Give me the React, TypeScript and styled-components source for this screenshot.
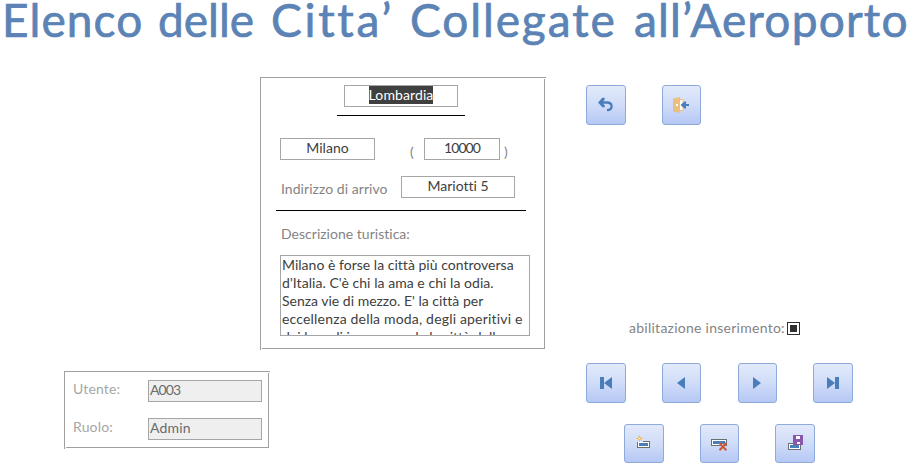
import React from "react";
import styled, { createGlobalStyle, css } from "styled-components";

const GlobalStyle = createGlobalStyle`
  * { box-sizing: border-box; }
  html, body { margin: 0; padding: 0; background: #fff; overflow: hidden; }
  body {
    font: 14px/18px Lato, "Open Sans", sans-serif;
    font-variant-ligatures: none;
    color: #404040;
  }
`;

const Page = styled.main`
  width: 916px;
  height: 466px;
`;

const Title = styled.h1`
  margin: 0;
  height: 77px;
  padding-left: 2px;
  display: flex;
  font: 400 46px/39px Lato, sans-serif;
  -webkit-text-stroke: 0.7px #5b83b5;
  color: #5b83b5;
  white-space: nowrap;
`;

const Word = styled.span<{ $width: number; $spacing: number }>`
  flex: none;
  width: ${(p) => p.$width}px;
  letter-spacing: ${(p) => p.$spacing}px;
`;

const Body = styled.div`
  display: flex;
  align-items: flex-start;
`;

const Records = styled.div`
  width: 586px;
  flex: none;
`;

/* Etched frame whose right and bottom edges start two pixels in. */
const frame = css`
  background-image: linear-gradient(#a0a0a0, #a0a0a0), linear-gradient(#a0a0a0, #a0a0a0),
    linear-gradient(#a0a0a0, #a0a0a0), linear-gradient(#a0a0a0, #a0a0a0);
  background-repeat: no-repeat;
  background-size: 100% 1px, 1px 100%, 1px calc(100% - 3px), calc(100% - 3px) 1px;
  background-position: 0 0, 0 0, right 1px top 2px, left 2px bottom 1px;
`;

const CityCard = styled.section`
  ${frame}
  width: 286px;
  height: 273px;
  margin-left: 260px;
  padding: 8px 16px 0;
`;

const UserCard = styled.section`
  ${frame}
  width: 206px;
  height: 78px;
  margin: 21px 0 0 64px;
  padding: 9px 0 0 9px;
  display: grid;
  grid-template-columns: 75px 114px;
  row-gap: 16px;
  align-content: start;
`;

const Field = styled.div<{ $width: number; $muted?: boolean; $spacing?: number }>`
  flex: none;
  width: ${(p) => p.$width}px;
  height: 22px;
  border: 1px solid #a6a6a6;
  background: ${(p) => (p.$muted ? "#efefef" : "#fff")};
  color: ${(p) => (p.$muted ? "#6b6b6b" : "#404040")};
  text-align: ${(p) => (p.$muted ? "left" : "center")};
  padding-left: ${(p) => (p.$muted ? 1 : 0)}px;
  letter-spacing: ${(p) => p.$spacing ?? 0}px;
  white-space: nowrap;
`;

const Region = styled(Field)`
  margin: 0 0 8px 68px;
`;

const Selected = styled.span`
  display: inline-block;
  height: 18px;
  background: #404040;
  color: #fff;
`;

const Rule = styled.hr<{ $width: number; $indent?: number }>`
  width: ${(p) => p.$width}px;
  height: 1px;
  margin: 0 0 0 ${(p) => p.$indent ?? 0}px;
  border: 0;
  background: #000;
`;

const CityRow = styled.div`
  display: flex;
  margin: 22px 0 0 4px;
`;

const AddressRow = styled.div`
  display: flex;
  margin: 15px 0 12px 5px;
`;

const Label = styled.span<{ $width?: number; $spacing?: number; $light?: boolean }>`
  flex: none;
  width: ${(p) => (p.$width ? `${p.$width}px` : "auto")};
  color: ${(p) => (p.$light ? "#a6a6a6" : "#848484")};
  letter-spacing: ${(p) => p.$spacing ?? 0}px;
  white-space: nowrap;
`;

const Paren = styled(Label)<{ $indent: number }>`
  padding: 5px 0 0 ${(p) => p.$indent}px;
`;

const AddressLabel = styled(Label)`
  padding-top: 4px;
`;

const DescriptionLabel = styled(Label)`
  display: block;
  margin: 14px 0 0 5px;
  height: 30px;
`;

const Description = styled.div`
  width: 250px;
  height: 81px;
  margin-left: 4px;
  padding-left: 1px;
  border: 1px solid #a6a6a6;
  overflow: hidden;
  white-space: nowrap;
`;

const Line = styled.div<{ $spacing: number }>`
  letter-spacing: ${(p) => p.$spacing}px;
`;

const Controls = styled.aside`
  flex: none;
  padding-top: 8px;
  width: 267px;
`;

const ButtonRow = styled.div`
  display: grid;
  grid-template-columns: 76px 76px 75px 40px;
`;

const LowerRow = styled.div`
  display: grid;
  grid-template-columns: 76px 75px 40px;
  margin: 21px 0 0 38px;
`;

const IconButton = styled.button<{ $short?: boolean; $narrow?: boolean }>`
  width: ${(p) => (p.$narrow ? 39 : 40)}px;
  height: ${(p) => (p.$short ? 39 : 40)}px;
  padding: 0;
  border: 1px solid #8eaadb;
  border-radius: 3px;
  background: linear-gradient(#e2eafa, #d0dcf8 50%, #b5c8f5);
  display: flex;
  align-items: flex-start;
  justify-content: flex-start;
  overflow: hidden;
`;

const Glyph = styled.svg`
  flex: none;
  display: block;
  width: 38px;
  height: 38px;
`;

const InsertToggle = styled.label`
  display: flex;
  margin: 194px 0 25px 43px;
  height: 19px;
`;

const CheckBox = styled.span`
  flex: none;
  width: 13px;
  height: 13px;
  margin-top: 3px;
  border: 1px solid #303030;
  background: #303030;
  background-clip: content-box;
  padding: 2px;
`;

const Icon = ({ children }: { children: React.ReactNode }) => (
  <Glyph viewBox="1 1 38 38" fill="none">{children}</Glyph>
);

const Record = ({ x, y, w }: { x: number; y: number; w: number }) => (
  <>
    <rect x={x + 0.5} y={y + 0.5} width={w - 1} height="6" fill="#fff" stroke="#6e6e6e" />
    <rect x={x + 2} y={y + 2} width={w - 4} height="3" fill="#4a7ebb" />
  </>
);

const App = () => (
  <Page>
    <GlobalStyle />
    <Title>
      <Word $width={156} $spacing={1.1}>Elenco</Word>
      <Word $width={113} $spacing={0}>delle</Word>
      <Word $width={139} $spacing={2.7}>Citta’</Word>
      <Word $width={224} $spacing={1.9}>Collegate</Word>
      <Word $width={280} $spacing={1.2}>all’Aeroporto</Word>
    </Title>
    <Body>
      <Records>
        <CityCard>
          <Region $width={114} $spacing={0.1}><Selected>Lombardia</Selected></Region>
          <Rule $width={128} $indent={61} />
          <CityRow>
            <Field $width={95}>Milano</Field>
            <Paren $width={49} $indent={35}>(</Paren>
            <Field $width={76} $spacing={-0.9}>10000</Field>
            <Paren $indent={4}>)</Paren>
          </CityRow>
          <AddressRow>
            <AddressLabel $width={120} $spacing={0.05}>Indirizzo di arrivo</AddressLabel>
            <Field $width={114}>Mariotti 5</Field>
          </AddressRow>
          <Rule $width={250} />
          <DescriptionLabel $spacing={0.02}>Descrizione turistica:</DescriptionLabel>
          <Description>
            <Line $spacing={0.02}>Milano è forse la città più controversa</Line>
            <Line $spacing={0.05}>d'Italia. C'è chi la ama e chi la odia.</Line>
            <Line $spacing={0}>Senza vie di mezzo. E' la città per</Line>
            <Line $spacing={0.18}>eccellenza della moda, degli aperitivi e</Line>
            <Line $spacing={0}>dei brandi in essa moda la città della</Line>
          </Description>
        </CityCard>
        <UserCard>
          <Label $light $spacing={0.15}>Utente:</Label>
          <Field $width={114} $muted $spacing={-0.9}>A003</Field>
          <Label $light $spacing={0.15}>Ruolo:</Label>
          <Field $width={114} $muted $spacing={0.2}>Admin</Field>
        </UserCard>
      </Records>
      <Controls>
        <ButtonRow>
          <IconButton aria-label="Annulla">
            <Icon>
              <path d="M14.5 17.5H21c6 0 6.2 7.3 0 7.6" stroke="#4a7ebb" strokeWidth="2.3" />
              <path d="M18.7 12.8h-2.4L12 17.5l4.3 4.7h2.4v-1.7l-2.4-3 2.4-3z" fill="#4a7ebb" />
            </Icon>
          </IconButton>
          <IconButton $narrow aria-label="Esci">
            <Icon>
              <path d="M16 14.5h5v11h-5" fill="#fff" stroke="#ebbf7d" />
              <path d="M11 13.5l7-1.5v16l-7-1.5z" fill="#ebbf7d" />
              <rect x="14" y="19" width="2" height="2" fill="#fff" />
              <path d="M18.5 20l4-3.5h1.5V19h3v2h-3v2.5h-1.5z" fill="#4a7ebb" />
            </Icon>
          </IconButton>
        </ButtonRow>
        <InsertToggle>
          <Label $width={158} $spacing={0.26}>abilitazione inserimento:</Label>
          <CheckBox />
        </InsertToggle>
        <ButtonRow>
          <IconButton aria-label="Primo">
            <Icon><path d="M14 14h4v12h-4zM26 14v12l-8-6z" fill="#4a7ebb" /></Icon>
          </IconButton>
          <IconButton $narrow aria-label="Precedente">
            <Icon><path d="M23 14v12l-8-6z" fill="#4a7ebb" /></Icon>
          </IconButton>
          <IconButton $narrow aria-label="Successivo">
            <Icon><path d="M15 14v12l8-6z" fill="#4a7ebb" /></Icon>
          </IconButton>
          <IconButton aria-label="Ultimo">
            <Icon><path d="M14 14v12l8-6zM22 14h4v12h-4z" fill="#4a7ebb" /></Icon>
          </IconButton>
        </ButtonRow>
        <LowerRow>
          <IconButton $short aria-label="Nuovo">
            <Icon>
              <Record x={13} y={17} w={13} />
              <path d="M12 11h7v7h-7z" fill="#dce6fa" />
              <path d="M15.5 11v7M12 14.5h7M13 12l5 5M18 12l-5 5" stroke="#ebbf7d" />
              <rect x="15" y="14" width="1" height="1" fill="#fff" />
            </Icon>
          </IconButton>
          <IconButton $short $narrow aria-label="Elimina">
            <Icon>
              <Record x={11} y={15} w={16} />
              <path d="M19.5 19l6.8 7.3M26.3 19l-6.8 7.3" stroke="#d2553a" strokeWidth="2" />
            </Icon>
          </IconButton>
          <IconButton $short aria-label="Salva">
            <Icon>
              <Record x={13} y={19} w={13} />
              <rect x="18" y="11" width="10" height="10" fill="#8a56ac" />
              <rect x="21" y="12" width="4" height="3" fill="#fff" />
              <rect x="22" y="18" width="3" height="2" fill="#fff" />
            </Icon>
          </IconButton>
        </LowerRow>
      </Controls>
    </Body>
  </Page>
);

export default App;
